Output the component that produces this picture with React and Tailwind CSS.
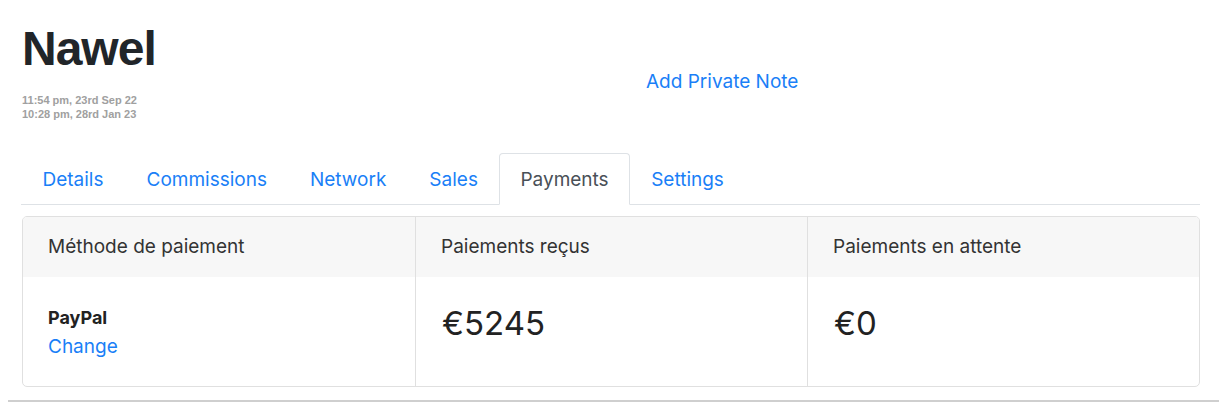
export default function App() {
  const tabs = ["Details", "Commissions", "Network", "Sales", "Payments", "Settings"];
  const sans = { fontFamily: "Inter, 'Liberation Sans', sans-serif" };
  return (
    <div className="w-[1227px] h-[402px] overflow-hidden bg-white" style={sans}>
      <div className="flex items-start pl-[22px] pt-[25px]">
        <div className="w-[624px] shrink-0">
          <h1 className="text-[48px] leading-[48px] font-bold tracking-[-1px] text-[#212529]" style={{ fontFamily: "'Liberation Sans', Arial, sans-serif" }}>
            Nawel
          </h1>
          <div className="mt-[20px] text-[11px] leading-[14px] font-bold text-[#a0a0a0]" style={{ fontFamily: "'Liberation Sans', Arial, sans-serif" }}>
            <div>11:54 pm, 23rd Sep 22</div>
            <div>10:28 pm, 28rd Jan 23</div>
          </div>
        </div>
        <a className="mt-[42px] text-[19px] leading-[30px] text-[#1a7ff7]">Add Private Note</a>
      </div>

      <div className="mt-[32px] ml-[21px] w-[1179px] flex border-b border-[#dee2e6]">
        {tabs.map((t) => (
          <div
            key={t}
            className={
              t === "Payments"
                ? "-mb-px px-[20px] pt-[11px] pb-[9px] text-[19px] leading-[30px] text-[#495057] bg-white border border-[#dee2e6] border-b-white rounded-t-[4px]"
                : "-mb-px px-[20.5px] pt-[11px] pb-[9px] text-[19px] leading-[30px] text-[#1a7ff7] border border-transparent"
            }
          >
            {t}
          </div>
        ))}
      </div>

      <div className="mt-[11px] ml-[22px] w-[1178px] border border-[#e0e0e0] rounded-[5px] overflow-hidden grid grid-cols-3">
        <div className="h-[60px] bg-[#f7f7f7] px-[25px] pt-px flex items-center text-[19px] text-[#333]">Méthode de paiement</div>
        <div className="h-[60px] bg-[#f7f7f7] px-[25px] pt-px flex items-center text-[19px] text-[#333] border-l border-[#e0e0e0]">Paiements reçus</div>
        <div className="h-[60px] bg-[#f7f7f7] px-[25px] pt-px flex items-center text-[19px] text-[#333] border-l border-[#e0e0e0]">Paiements en attente</div>

        <div className="h-[109px] px-[25px] pt-[27px]">
          <div className="text-[18px] leading-[28px] font-bold text-[#222]">PayPal</div>
          <div className="text-[19px] leading-[30px] text-[#1a7ff7]">Change</div>
        </div>
        <div className="h-[109px] px-[26px] pt-[24px] border-l border-[#e0e0e0]">
          <div className="text-[33px] leading-[44px] text-[#222]">€5245</div>
        </div>
        <div className="h-[109px] px-[26px] pt-[24px] border-l border-[#e0e0e0]">
          <div className="text-[33px] leading-[44px] text-[#222]">€0</div>
        </div>
      </div>

      <div className="mt-[13px] ml-[8px] w-[1211px] h-[2px] bg-[#cfcfcf]" />
    </div>
  );
}
